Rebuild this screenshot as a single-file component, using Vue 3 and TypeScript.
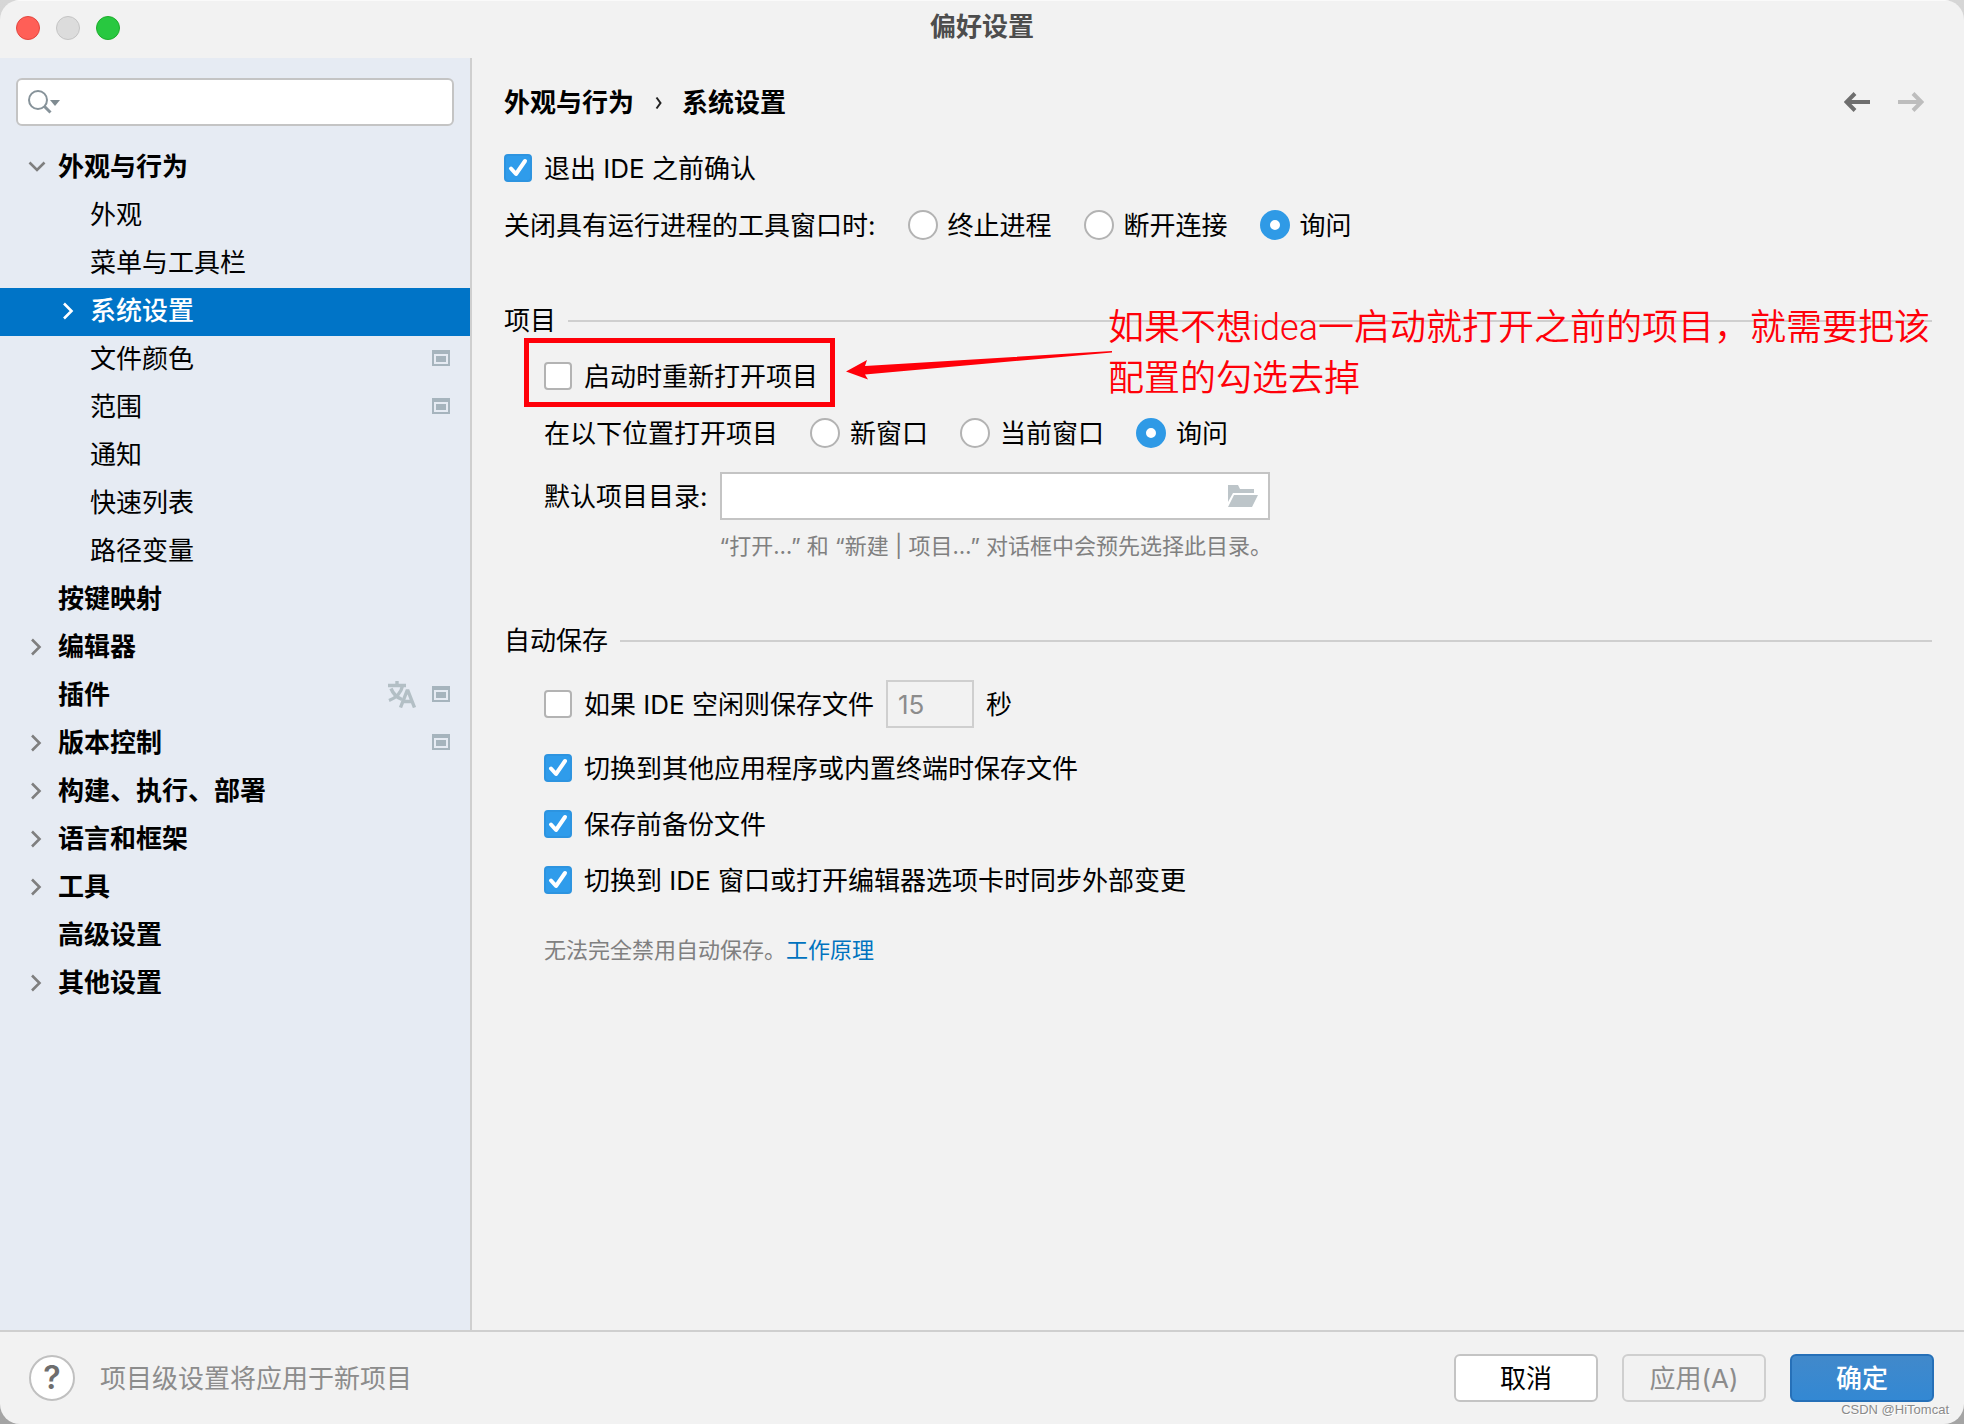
<script setup lang="ts">
import { ref } from 'vue'

interface TreeItem {
  label: string
  level: 0 | 1
  arrow?: 'open' | 'closed'
  project?: boolean
  language?: boolean
}

const items: TreeItem[] = [
  { label: '外观与行为', level: 0, arrow: 'open' },
  { label: '外观', level: 1 },
  { label: '菜单与工具栏', level: 1 },
  { label: '系统设置', level: 1, arrow: 'closed' },
  { label: '文件颜色', level: 1, project: true },
  { label: '范围', level: 1, project: true },
  { label: '通知', level: 1 },
  { label: '快速列表', level: 1 },
  { label: '路径变量', level: 1 },
  { label: '按键映射', level: 0 },
  { label: '编辑器', level: 0, arrow: 'closed' },
  { label: '插件', level: 0, project: true, language: true },
  { label: '版本控制', level: 0, arrow: 'closed', project: true },
  { label: '构建、执行、部署', level: 0, arrow: 'closed' },
  { label: '语言和框架', level: 0, arrow: 'closed' },
  { label: '工具', level: 0, arrow: 'closed' },
  { label: '高级设置', level: 0 },
  { label: '其他设置', level: 0, arrow: 'closed' },
]

const selected = ref('系统设置')
const query = ref('')
const confirmExit = ref(true)
const closeAction = ref('询问')
const closeOptions = ['终止进程', '断开连接', '询问']
const reopen = ref(false)
const openIn = ref('询问')
const openOptions = ['新窗口', '当前窗口', '询问']
const directory = ref('')
const saveIdle = ref(false)
const idleSeconds = ref('15')
const saveOptions = ref([
  { label: '切换到其他应用程序或内置终端时保存文件', on: true },
  { label: '保存前备份文件', on: true },
  { label: '切换到 IDE 窗口或打开编辑器选项卡时同步外部变更', on: true },
])
</script>

<template>
  <div class="window">
    <header class="titlebar">
      <div class="lights">
        <button class="light close" aria-label="关闭"></button>
        <button class="light minimize" aria-label="最小化" disabled></button>
        <button class="light zoom" aria-label="缩放"></button>
      </div>
      <h1>偏好设置</h1>
    </header>

    <div class="body">
      <aside class="sidebar">
        <div class="search">
          <svg width="34" height="26" viewBox="0 0 34 26" aria-hidden="true">
            <circle cx="10" cy="11" r="9" fill="none" stroke="#87939a" stroke-width="2" />
            <path d="M16 17l6.500 6.500" stroke="#87939a" stroke-width="3" />
            <path d="M22 11h10l-5 6z" fill="#7f8b91" />
          </svg>
          <input v-model="query" type="text" aria-label="搜索设置" />
        </div>
        <ul class="tree">
          <li v-for="item in items" :key="item.label">
            <button
              class="node"
              :class="['level-' + item.level, { selected: selected === item.label }]"
              @click="selected = item.label"
            >
              <span class="arrow">
                <svg v-if="item.arrow === 'open'" class="open" width="18" height="12" viewBox="0 0 18 12"><path d="M1.500 1.500l7.500 7.500L16.500 1.500" stroke-width="2.600" /></svg>
                <svg v-if="item.arrow === 'closed'" width="12" height="18" viewBox="0 0 12 18"><path d="M2 1.500L9.500 9 2 16.500" stroke-width="2.600" /></svg>
              </span>
              <span class="name">{{ item.label }}</span>
              <svg v-if="item.language" class="language" width="28" height="28" viewBox="0 0 28 28" aria-hidden="true">
                <g fill="none" stroke="#b3bfc5" stroke-width="3.400">
                  <path d="M0 5.500h18M9 1v4.500M3 8.500c2 5 6 9 11 11M14.500 6c-1.500 7-7 12-13.500 14.500" />
                  <path d="M12.500 27.500L19 11h1l6.500 16.500M15 21.500h9.500" />
                </g>
              </svg>
              <svg v-if="item.project" class="project" width="18" height="16" viewBox="0 0 18 16" aria-hidden="true">
                <path fill="#a6b4bd" fill-rule="evenodd" d="M0 0h18v16H0zM2 4v10h14V4z" />
                <path fill="#a6b4bd" d="M4 6h10v6H4z" />
              </svg>
            </button>
          </li>
        </ul>
      </aside>

      <main class="content">
        <nav class="crumbs">
          <span>外观与行为</span>
          <svg class="divider" width="8" height="14" viewBox="0 0 8 14" aria-hidden="true"><path d="M1.500 1.500L5.500 7l-4 5.500" fill="none" stroke="#222" stroke-width="2" /></svg>
          <span>系统设置</span>
          <div class="history">
            <button aria-label="后退">
              <svg width="26" height="20" viewBox="0 0 26 20"><path d="M26 10H3M11 1.500L2.500 10l8.500 8.500" fill="none" stroke="#6e6e6e" stroke-width="4" /></svg>
            </button>
            <button aria-label="前进" disabled>
              <svg width="26" height="20" viewBox="0 0 26 20"><path d="M0 10h23M15 1.500l8.500 8.500-8.500 8.500" fill="none" stroke="#bdbdbd" stroke-width="4" /></svg>
            </button>
          </div>
        </nav>

        <label class="row check">
          <span class="box">
            <input v-model="confirmExit" type="checkbox" />
            <svg viewBox="0 0 28 28"><path d="M7 14.500l5 5.500 9-13" /></svg>
          </span>
          <span class="text">退出 IDE 之前确认</span>
        </label>

        <div class="row radios" role="radiogroup" aria-labelledby="close-label">
          <span id="close-label" class="text">关闭具有运行进程的工具窗口时:</span>
          <label v-for="option in closeOptions" :key="option">
            <input v-model="closeAction" type="radio" name="close-action" :value="option" />
            <span class="text">{{ option }}</span>
          </label>
        </div>

        <section class="group project-group">
          <h2>项目</h2>
          <div class="indent reopen">
            <label class="check">
              <span class="box">
                <input v-model="reopen" type="checkbox" />
                <svg viewBox="0 0 28 28"><path d="M7 14.500l5 5.500 9-13" /></svg>
              </span>
              <span class="text">启动时重新打开项目</span>
            </label>
            <span class="highlight"></span>
          </div>
          <div class="indent radios open-in" role="radiogroup" aria-labelledby="open-label">
            <span id="open-label" class="text">在以下位置打开项目</span>
            <label v-for="option in openOptions" :key="option">
              <input v-model="openIn" type="radio" name="open-in" :value="option" />
              <span class="text">{{ option }}</span>
            </label>
          </div>
          <div class="indent directory">
            <label for="directory">默认项目目录:</label>
            <div class="field">
              <div class="path">
                <input id="directory" v-model="directory" type="text" />
                <button aria-label="浏览">
                  <svg width="30" height="22" viewBox="0 0 30 22"><path fill="#bdc5c9" d="M0 0h10l2 4h14v4H5L0 17zM6 10h24l-6 12H0z" /></svg>
                </button>
              </div>
              <p class="hint">“打开…” 和 “新建 | 项目…” 对话框中会预先选择此目录。</p>
            </div>
          </div>
          <svg class="pointer" width="268" height="30" viewBox="0 0 268 30" aria-hidden="true">
            <path fill="#ff0009" d="M0 21.500L21 10l-2 6L266 1v1.500L19 24.500l3 5z" />
          </svg>
          <p class="note">如果不想idea一启动就打开之前的项目，就需要把该<br />配置的勾选去掉</p>
        </section>

        <section class="group autosave">
          <h2>自动保存</h2>
          <div class="indent idle">
            <label class="check">
              <span class="box">
                <input v-model="saveIdle" type="checkbox" />
                <svg viewBox="0 0 28 28"><path d="M7 14.500l5 5.500 9-13" /></svg>
              </span>
              <span class="text">如果 IDE 空闲则保存文件</span>
            </label>
            <input id="seconds" v-model="idleSeconds" class="seconds" type="text" :disabled="!saveIdle" />
            <label for="seconds" class="text">秒</label>
          </div>
          <div class="indent save-list">
            <label v-for="option in saveOptions" :key="option.label" class="row check">
              <span class="box">
                <input v-model="option.on" type="checkbox" />
                <svg viewBox="0 0 28 28"><path d="M7 14.500l5 5.500 9-13" /></svg>
              </span>
              <span class="text">{{ option.label }}</span>
            </label>
          </div>
          <p class="indent hint footnote">无法完全禁用自动保存。<a href="#">工作原理</a></p>
        </section>
      </main>
    </div>

    <footer class="footer">
      <button class="help" aria-label="帮助">?</button>
      <span class="status text">项目级设置将应用于新项目</span>
      <div class="actions">
        <button>取消</button>
        <button disabled>应用(A)</button>
        <button class="primary">确定</button>
      </div>
      <span class="watermark">CSDN @HiTomcat</span>
    </footer>
  </div>
</template>

<style>
body {
  margin: 0;
  background: linear-gradient(#d6d6d6, #a4a4a4);
}
</style>

<style scoped>
* {
  box-sizing: border-box;
}
.window {
  position: relative;
  display: flex;
  flex-direction: column;
  min-height: 100vh;
  overflow: hidden;
  border-radius: 20px;
  background: #f2f2f2;
  color: #000;
  font: 26px/40px Inter, "Noto Sans CJK SC", sans-serif;
}
button,
input {
  margin: 0;
  padding: 0;
  border: 0;
  background: none;
  color: inherit;
  font: inherit;
}
svg {
  flex: none;
  display: block;
}
h1,
h2,
p,
ul {
  margin: 0;
  padding: 0;
  font-size: inherit;
  list-style: none;
}
.text,
.name {
  padding-top: 2px;
}
.titlebar {
  display: grid;
  grid-template-columns: 1fr auto 1fr;
  height: 58px;
  padding: 0 16px;
  border-top: 1px solid #fafafa;
}
.titlebar h1 {
  line-height: 52px;
  font-weight: 600;
  color: #4d4d4d;
}
.lights {
  display: flex;
  gap: 16px;
  padding-top: 15px;
}
.light {
  width: 24px;
  height: 24px;
  border: 1px solid #c4c4c4;
  border-radius: 50%;
  background: #dcdcdc;
}
.close {
  border-color: #e2463f;
  background: #ff5f57;
}
.zoom {
  border-color: #1dad2b;
  background: #28c840;
}
.body {
  display: flex;
  flex: 1;
}
.sidebar {
  flex: none;
  width: 472px;
  padding-top: 20px;
  border-right: 2px solid #cfcfcf;
  background: #e6ebf3;
}
.search {
  display: flex;
  align-items: center;
  height: 48px;
  margin: 0 16px 18px;
  padding: 0 10px;
  border: 2px solid #c4c4c4;
  border-radius: 6px;
  background: #fff;
}
.search input {
  flex: 1;
  min-width: 0;
  outline: 0;
}
.node {
  display: flex;
  align-items: center;
  width: 100%;
  height: 48px;
  padding: 0 20px 4px 28px;
  text-align: left;
}
.level-0 {
  font-weight: 600;
}
.level-1 {
  padding-left: 60px;
}
.selected {
  background: #0074c7;
  color: #fff;
  font-weight: 500;
}
.arrow {
  width: 30px;
  padding: 2px 0 0 2px;
}
.arrow .open {
  margin-left: -2px;
}
.arrow path {
  fill: none;
  stroke: #7f7f7f;
}
.selected .arrow path {
  stroke: #fff;
}
.name {
  flex: 1;
}
.project {
  margin-left: 16px;
}
.content {
  flex: 1;
  min-width: 0;
  padding: 20px 32px 40px;
}
.crumbs {
  display: flex;
  align-items: center;
  gap: 19px;
  height: 50px;
  margin-bottom: 12px;
  font-weight: 600;
}
.divider {
  margin-left: 2px;
}
.history {
  display: flex;
  gap: 28px;
  margin: 0 8px 2px auto;
}
.row {
  height: 56px;
}
.check {
  display: flex;
  align-items: center;
  gap: 12px;
}
.box {
  display: grid;
  width: 28px;
  height: 28px;
}
.box > * {
  grid-area: 1 / 1;
  width: 28px;
  height: 28px;
}
.box input {
  appearance: none;
  border: 2px solid #b3b3b3;
  border-radius: 4px;
  background: #fff;
}
.box input:checked {
  border-color: #2d94e0;
  background: #2f9ceb;
}
.box path {
  fill: none;
  stroke: #fff;
  stroke-width: 4;
  stroke-linecap: round;
  stroke-linejoin: round;
}
.box svg {
  pointer-events: none;
}
.radios {
  display: flex;
  align-items: center;
  gap: 32px;
}
.radios label {
  display: flex;
  align-items: center;
  gap: 10px;
}
.radios input {
  appearance: none;
  width: 30px;
  height: 30px;
  border: 2px solid #b3b3b3;
  border-radius: 50%;
  background: #fff;
}
.radios input:checked {
  border: 10px solid #2f9ae6;
}
.row.radios {
  height: 58px;
}
.group {
  position: relative;
}
.project-group {
  margin-top: 46px;
}
.group h2 {
  display: flex;
  align-items: center;
  gap: 12px;
  height: 42px;
  font-weight: 400;
}
.group h2::after {
  content: "";
  flex: 1;
  height: 2px;
  background: #cfcfcf;
}
.indent {
  margin-left: 40px;
}
.reopen {
  position: relative;
  display: flex;
  height: 68px;
}
.highlight {
  position: absolute;
  left: -20px;
  top: -4px;
  width: 311px;
  height: 69px;
  border: 5px solid #ff0009;
  pointer-events: none;
}
.open-in {
  height: 46px;
}
.directory {
  display: flex;
  gap: 12px;
  margin-top: 16px;
  line-height: 50px;
}
.path {
  display: flex;
  align-items: center;
  width: 550px;
  height: 48px;
  padding: 0 10px;
  border: 2px solid #c4c4c4;
  background: #fff;
}
.path input {
  flex: 1;
  min-width: 0;
  outline: 0;
}
.hint {
  margin-top: 10px;
  font-size: 22px;
  line-height: 32px;
  color: #808080;
}
.pointer {
  position: absolute;
  left: 342px;
  top: 50px;
  pointer-events: none;
}
.note {
  position: absolute;
  left: 604px;
  top: 3px;
  font-family: Roboto, "Noto Sans CJK SC", sans-serif;
  font-size: 36px;
  font-weight: 350;
  line-height: 51px;
  white-space: nowrap;
  color: #ff0009;
}
.autosave {
  margin-top: 58px;
}
.idle {
  display: flex;
  align-items: center;
  gap: 12px;
  margin-top: 18px;
}
.seconds {
  width: 88px;
  height: 48px;
  padding: 0 10px;
  border: 2px solid #cfcfcf;
  color: #8c8c8c;
}
.save-list {
  margin-top: 12px;
}
.footnote {
  margin-top: 26px;
}
.footnote a {
  color: #0073bf;
  text-decoration: none;
}
.footer {
  position: relative;
  display: flex;
  align-items: center;
  height: 94px;
  padding: 0 30px 0 29px;
  border-top: 2px solid #cfcfcf;
}
.help {
  width: 46px;
  height: 46px;
  border: 2px solid #c0c0c0;
  border-radius: 50%;
  background: #fff;
  color: #6e6e6e;
  font-size: 32px;
  font-weight: 600;
  line-height: 40px;
}
.status {
  margin-left: 25px;
  color: #8c8c8c;
}
.actions {
  display: flex;
  gap: 24px;
  margin-left: auto;
}
.actions button {
  width: 144px;
  height: 48px;
  padding-top: 2px;
  border: 2px solid #c4c4c4;
  border-radius: 6px;
  background: #fff;
}
.actions button:disabled {
  border-color: #cfcfcf;
  background: none;
  color: #8c8c8c;
}
.actions .primary {
  border-color: #2670b8;
  background: linear-gradient(#4189cb, #3388d3);
  color: #fff;
  font-weight: 500;
}
.watermark {
  position: absolute;
  right: 15px;
  bottom: 4px;
  font: 13px/20px "Liberation Sans", sans-serif;
  color: #8a8a8a;
  text-shadow: 1px 1px 0 #fff;
}
</style>
